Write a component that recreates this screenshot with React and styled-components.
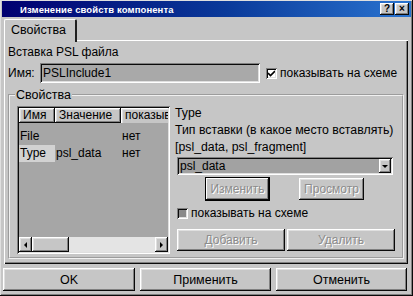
import styled, { createGlobalStyle } from "styled-components";

const GlobalStyle = createGlobalStyle`
  html, body {
    margin: 0;
    padding: 0;
    background: #c6c6c6;
  }
  body {
    font-family: "Liberation Sans", Arial, sans-serif;
    font-size: 12px;
    color: #000;
  }
  * {
    box-sizing: border-box;
  }
`;

const raised = `
  box-shadow: inset -1px -1px #0a0a0a, inset 1px 1px #ffffff,
    inset -2px -2px #808080, inset 2px 2px #dfdfdf;
`;

const sunken = `
  box-shadow: inset 1px 1px #808080, inset -1px -1px #ffffff,
    inset 2px 2px #0a0a0a, inset -2px -2px #dfdfdf;
`;

const Window = styled.div`
  width: 413px;
  height: 296px;
  display: flex;
  flex-direction: column;
  padding: 1px 2px 0 2px;
  background: #c6c6c6;
  box-shadow: inset -1px -1px #0a0a0a, inset 1px 1px #dfdfdf,
    inset -2px -2px #808080;
`;

const TitleBar = styled.div`
  height: 16px;
  display: flex;
  align-items: center;
  padding-left: 18px;
  padding-right: 2px;
  background: linear-gradient(90deg, #000070 0%, #0a3a9a 55%, #2a74d0 100%);
  color: #fff;
  font-weight: bold;
  font-size: 9.5px;
  letter-spacing: 0.1px;
`;

const TitleButtons = styled.div`
  margin-left: auto;
  display: flex;
  gap: 1px;
`;

const TitleButton = styled.div`
  width: 14px;
  height: 12px;
  background: #c6c6c6;
  ${raised}
  color: #000;
  font-size: 10px;
  font-weight: bold;
  line-height: 12px;
  text-align: center;
`;

const Content = styled.div`
  flex: 1;
  display: flex;
  flex-direction: column;
  padding: 2px 2px 0 1px;
`;

const TabStrip = styled.div`
  height: 21px;
  display: flex;
  margin-left: 1px;
`;

const Tab = styled.div`
  position: relative;
  z-index: 1;
  width: 73px;
  height: 23px;
  padding: 3px 0 0 6px;
  background: #c6c6c6;
  border-top: 1px solid #fff;
  border-left: 1px solid #fff;
  border-right: 2px solid #202020;
  border-radius: 2px 2px 0 0;
  font-size: 12.5px;
`;

const Panel = styled.div`
  height: 224px;
  margin: 0 1px 0 1px;
  padding: 4px 2px 0;
  background: #c6c6c6;
  box-shadow: inset 1px 1px #ffffff, inset -1px -1px #0a0a0a,
    inset -2px -2px #808080;
`;

const Heading = styled.div`
  line-height: 16px;
  padding-left: 2px;
`;

const NameRow = styled.div`
  margin-top: 3px;
  height: 20px;
  display: flex;
  align-items: center;
  padding-left: 2px;
`;

const NameLabel = styled.span`
  width: 32px;
`;

const TextField = styled.div`
  width: 220px;
  height: 20px;
  padding: 3px 0 0 3px;
  background: #a9a9a9;
  ${sunken}
`;

const CheckRow = styled.div`
  display: flex;
  align-items: center;
  gap: 3px;
  margin-left: ${(p) => p.$indent || 0}px;
  margin-top: ${(p) => p.$top || 0}px;
  height: 12px;
`;

const CheckBox = styled.div`
  width: 11px;
  height: 11px;
  background: ${(p) => (p.$disabled ? "#8a8a8a" : "#fff")};
  ${sunken}
  display: flex;
  align-items: center;
  justify-content: center;

  svg {
    width: 7px;
    height: 7px;
  }
`;

const Group = styled.fieldset`
  margin: 5px 2px 0;
  padding: 4px 7px 3px 7px;
  border: 2px groove #f0f0f0;
  display: grid;
  grid-template-columns: 153px 1fr;
  gap: 5px;
  min-width: 0;
`;

const Legend = styled.legend`
  padding: 0 1px;
  margin-left: -2px;
  line-height: 14px;
  font-size: 12.5px;
`;

const List = styled.div`
  height: 148px;
  padding: 2px;
  background: #a6a6a6;
  ${sunken}
  display: flex;
  flex-direction: column;
  overflow: hidden;
`;

const HeaderRow = styled.div`
  display: flex;
  height: 15px;
  flex-shrink: 0;
`;

const HeaderCell = styled.div`
  width: ${(p) => p.$w}px;
  flex-shrink: 0;
  padding: 1px 0 0 4px;
  background: #c6c6c6;
  ${(p) =>
    p.$open
      ? "box-shadow: inset 1px 1px #ffffff, inset 2px 2px #dfdfdf;"
      : raised}
  white-space: nowrap;
  overflow: hidden;
  line-height: 13px;
`;

const Rows = styled.div`
  margin-top: 5px;
  flex: 1;
`;

const Row = styled.div`
  display: flex;
  height: 17px;
  line-height: 17px;
`;

const Cell = styled.div`
  width: ${(p) => p.$w}px;
  flex-shrink: 0;
  padding-left: 1px;
  background: ${(p) => (p.$focus ? "#d2d2d2" : "transparent")};
`;

const ScrollBar = styled.div`
  height: 15px;
  display: flex;
  background: #e4e4e4;
`;

const ScrollArrow = styled.div`
  width: 13px;
  height: 15px;
  background: #c6c6c6;
  ${raised}
  display: flex;
  align-items: center;
  justify-content: center;

  &::after {
    content: "";
    border-top: 3px solid transparent;
    border-bottom: 3px solid transparent;
    ${(p) =>
      p.$dir === "left"
        ? "border-right: 3px solid #000;"
        : "border-left: 3px solid #000;"}
  }
`;

const ScrollThumb = styled.div`
  width: 37px;
  background: #c6c6c6;
  ${raised}
`;

const ScrollTrack = styled.div`
  flex: 1;
`;

const Side = styled.div`
  display: flex;
  flex-direction: column;
  margin-top: -1px;
`;

const SideLine = styled.div`
  line-height: 17px;
  font-size: 12.3px;
  white-space: nowrap;
`;

const Select = styled.div`
  margin: 1px 0 0 2px;
  width: 216px;
  height: 18px;
  display: flex;
  align-items: center;
  padding: 2px 2px 2px 3px;
  background: #a2a2a2;
  ${sunken}
`;

const SelectValue = styled.span`
  flex: 1;
`;

const SelectArrow = styled.div`
  width: 12px;
  height: 14px;
  background: #c6c6c6;
  ${raised}
  display: flex;
  align-items: center;
  justify-content: center;

  &::after {
    content: "";
    border-left: 3px solid transparent;
    border-right: 3px solid transparent;
    border-top: 3px solid #000;
  }
`;

const ButtonRow = styled.div`
  display: flex;
  align-items: flex-start;
  gap: ${(p) => p.$gap}px;
  margin-top: ${(p) => p.$top}px;
  padding-left: ${(p) => p.$indent}px;
`;

const Button = styled.div`
  width: ${(p) => p.$w}px;
  height: ${(p) => (p.$default ? 24 : 22)}px;
  margin-top: ${(p) => (p.$offset ? 1 : 0)}px;
  display: flex;
  align-items: center;
  justify-content: center;
  background: #c6c6c6;
  ${raised}
  ${(p) =>
    p.$default &&
    "border: 1px solid #000; box-shadow: inset -1px -1px #0a0a0a, inset 1px 1px #ffffff, inset -2px -2px #808080;"}
  color: ${(p) => (p.$disabled ? "#8c8c8c" : "#000")};
  text-shadow: ${(p) => (p.$disabled ? "1px 1px #fff" : "none")};
`;

const Footer = styled.div`
  display: grid;
  grid-template-columns: 132px 131px 131px;
  gap: 5px;
  margin: 4px 1px 0 0;
`;

const FooterButton = styled.div`
  height: 23px;
  display: flex;
  align-items: center;
  justify-content: center;
  background: #c6c6c6;
  ${raised}
  font-size: 12.5px;
`;

const Check = () => (
  <svg viewBox="0 0 7 7">
    <path d="M0 3 L2.5 5.5 L7 1" stroke="#000" strokeWidth="1.6" fill="none" />
  </svg>
);

const properties = [
  { name: "File", value: "", show: "нет" },
  { name: "Type", value: "psl_data", show: "нет", focus: true },
];

export default function App() {
  return (
    <Window>
      <GlobalStyle />
      <TitleBar>
        Изменение свойств компонента
        <TitleButtons>
          <TitleButton>?</TitleButton>
          <TitleButton>×</TitleButton>
        </TitleButtons>
      </TitleBar>
      <Content>
        <TabStrip>
          <Tab>Свойства</Tab>
        </TabStrip>
        <Panel>
          <Heading>Вставка PSL файла</Heading>
          <NameRow>
            <NameLabel>Имя:</NameLabel>
            <TextField>PSLInclude1</TextField>
            <CheckRow $indent={6}>
              <CheckBox>
                <Check />
              </CheckBox>
              показывать на схеме
            </CheckRow>
          </NameRow>
          <Group>
            <Legend>Свойства</Legend>
            <List>
              <HeaderRow>
                <HeaderCell $w={36}>Имя</HeaderCell>
                <HeaderCell $w={66}>Значение</HeaderCell>
                <HeaderCell $w={47} $open>
                  показывать на схеме
                </HeaderCell>
              </HeaderRow>
              <Rows>
                {properties.map((p) => (
                  <Row key={p.name}>
                    <Cell $w={36} $focus={p.focus}>
                      {p.name}
                    </Cell>
                    <Cell $w={66}>{p.value}</Cell>
                    <Cell $w={40}>{p.show}</Cell>
                  </Row>
                ))}
              </Rows>
              <ScrollBar>
                <ScrollArrow $dir="left" />
                <ScrollThumb />
                <ScrollTrack />
                <ScrollArrow $dir="right" />
              </ScrollBar>
            </List>
            <Side>
              <SideLine>Type</SideLine>
              <SideLine>Тип вставки (в какое место вставлять)</SideLine>
              <SideLine>[psl_data, psl_fragment]</SideLine>
              <Select>
                <SelectValue>psl_data</SelectValue>
                <SelectArrow />
              </Select>
              <ButtonRow $gap={29} $top={2} $indent={30}>
                <Button $w={65} $default $disabled>
                  Изменить
                </Button>
                <Button $w={65} $offset $disabled>
                  Просмотр
                </Button>
              </ButtonRow>
              <CheckRow $indent={2} $top={6}>
                <CheckBox $disabled />
                показывать на схеме
              </CheckRow>
              <ButtonRow $gap={2} $top={10} $indent={2}>
                <Button $w={108} $disabled>
                  Добавить
                </Button>
                <Button $w={108} $disabled>
                  Удалить
                </Button>
              </ButtonRow>
            </Side>
          </Group>
        </Panel>
        <Footer>
          <FooterButton>OK</FooterButton>
          <FooterButton>Применить</FooterButton>
          <FooterButton>Отменить</FooterButton>
        </Footer>
      </Content>
    </Window>
  );
}
